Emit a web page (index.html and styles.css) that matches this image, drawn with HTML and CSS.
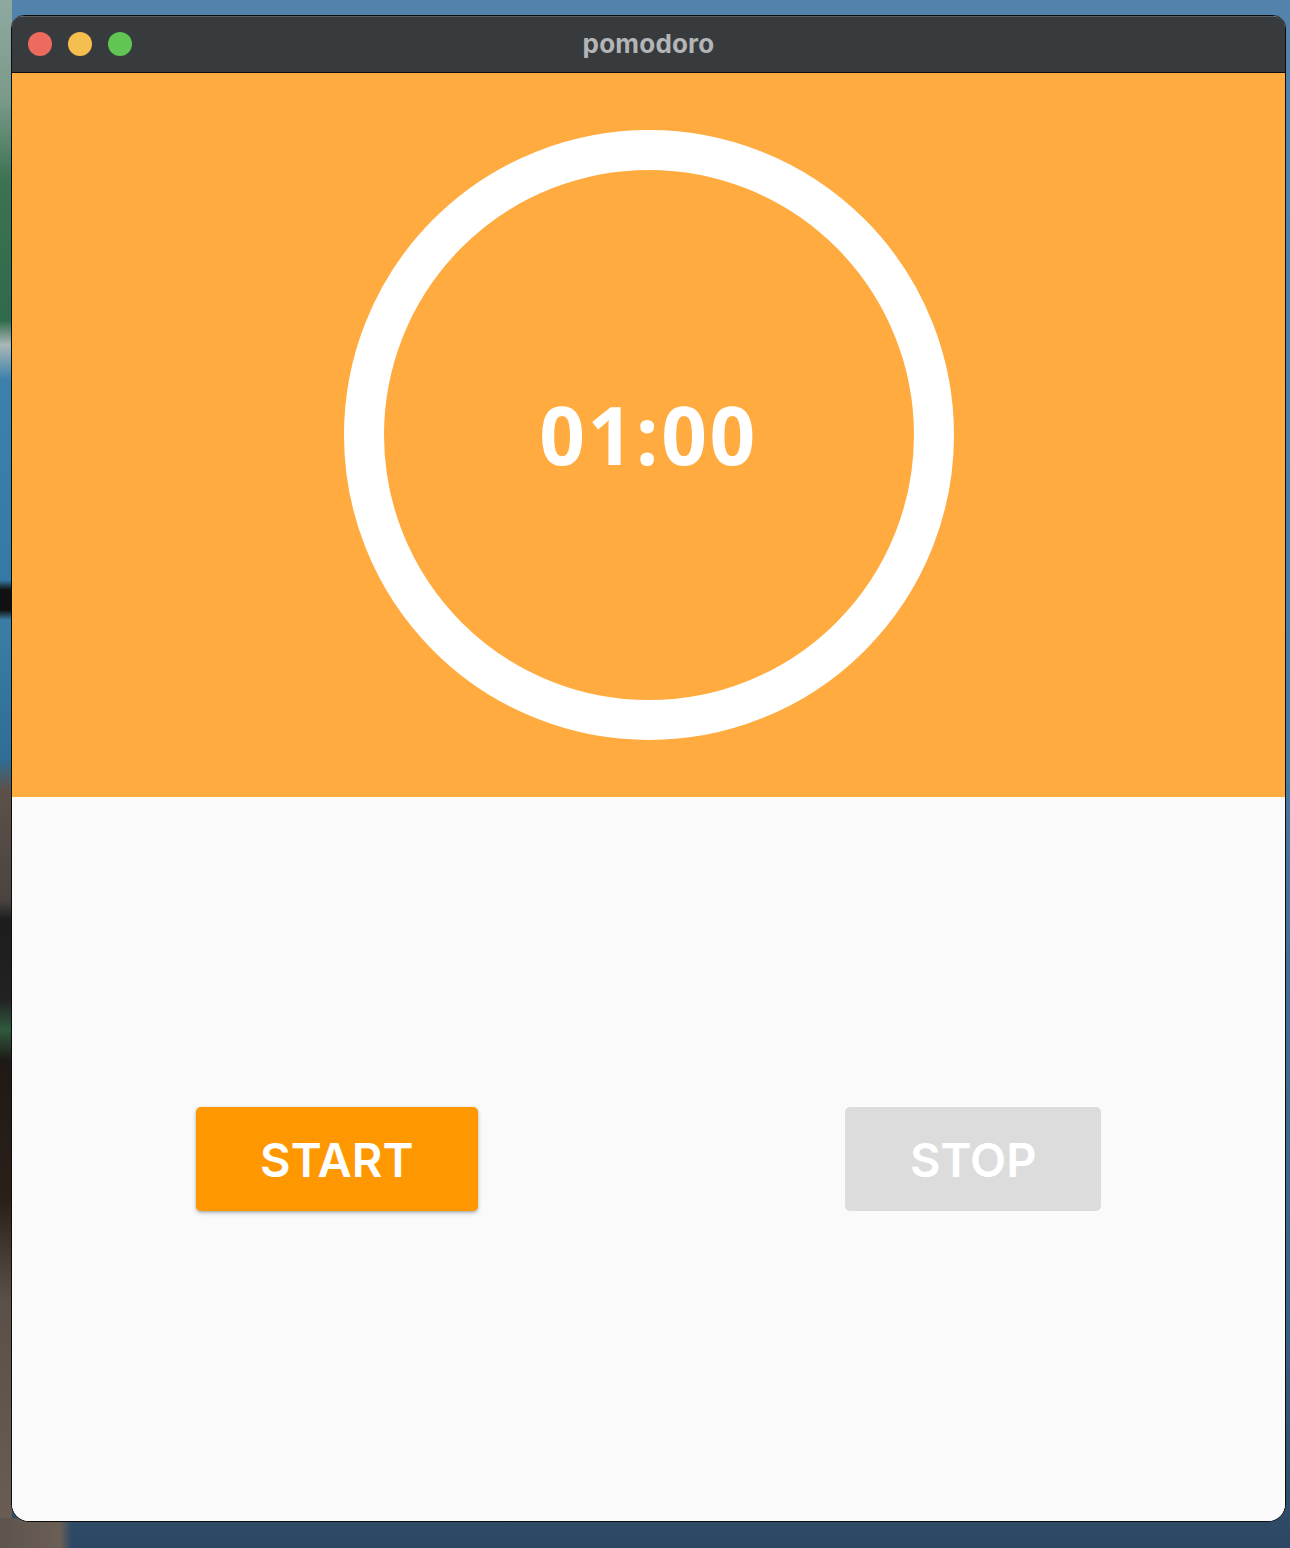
FILE: index.html
```html
<!DOCTYPE html>
<html lang="en">
<head>
<meta charset="utf-8">
<title>pomodoro</title>
<link rel="stylesheet" href="styles.css">
</head>
<body>
<div class="window">
  <header class="titlebar">
    <div class="lights">
      <span class="light red"></span>
      <span class="light yellow"></span>
      <span class="light green"></span>
    </div>
    <div class="title">pomodoro</div>
    <div class="spacer"></div>
  </header>
  <main class="app">
    <section class="timer-pane">
      <div class="ring">
        <span class="time">01:00</span>
      </div>
    </section>
    <section class="controls">
      <button class="btn btn-start" type="button">START</button>
      <button class="btn btn-stop" type="button" disabled>STOP</button>
    </section>
  </main>
</div>
</body>
</html>
```
FILE: styles.css
```css
html, body {
  margin: 0;
  padding: 0;
}

body {
  width: 1290px;
  height: 1548px;
  overflow: hidden;
  background:
    linear-gradient(to right, #5e544c 0px, #6a5e55 60px, rgba(106, 94, 85, 0) 72px)
      left bottom / 80px 30px no-repeat,
    linear-gradient(to bottom,
      #8fa9a0 0px, #7a9a8a 100px, #3c7352 180px, #2f6a4a 320px,
      #a9b7b8 345px, #3b81ab 380px, #347aa4 580px, #111 590px,
      #111 610px, #3a7ea6 620px, #2f6d94 760px, #5c5148 790px,
      #4a4440 900px, #1d1d1d 920px, #222 1000px, #2f5a3e 1030px,
      #1f1a16 1060px, #2a2018 1200px, #5b5047 1300px, #6a5e55 1548px)
      left top / 12px 100% no-repeat,
    linear-gradient(to bottom, #5283ad 0px, #4a7aa3 700px, #3a6287 1300px, #2c4763 1548px);
  font-family: "Inter", "Liberation Sans", sans-serif;
}

.window {
  margin: 15px 0 0 11px;
  width: 1273px;
  border: 1px solid #0d0d0d;
  border-radius: 13px 13px 18px 18px;
  overflow: hidden;
  display: flex;
  flex-direction: column;
  background: #fafafa;
}

.titlebar {
  height: 56px;
  background: #373b3d;
  border-bottom: 1px solid #0c0c0c;
  box-shadow: inset 0 1px 0 rgba(255, 255, 255, 0.18);
  display: grid;
  grid-template-columns: 1fr auto 1fr;
  align-items: center;
}

.lights {
  display: flex;
  gap: 16px;
  padding-left: 16px;
}

.light {
  width: 24px;
  height: 24px;
  border-radius: 50%;
  display: block;
}

.red { background: #ed6a5e; }
.yellow { background: #f5bf4f; }
.green { background: #61c554; }

.title {
  color: #b3b5b7;
  font-family: "Inter", "Liberation Sans", sans-serif;
  font-weight: 700;
  font-size: 26px;
  letter-spacing: 0.2px;
  margin-top: -2px;
}

.app {
  display: flex;
  flex-direction: column;
}

.timer-pane {
  height: 724px;
  background: #ffab40;
  display: flex;
  align-items: center;
  justify-content: center;
}

.ring {
  width: 610px;
  height: 610px;
  box-sizing: border-box;
  border: 40px solid #ffffff;
  border-radius: 50%;
  display: flex;
  align-items: center;
  justify-content: center;
}

.time {
  color: #ffffff;
  font-family: "Open Sans", "Liberation Sans", sans-serif;
  font-weight: 700;
  font-size: 80px;
  letter-spacing: 2.5px;
  line-height: 1;
  margin-top: -3px;
}

.controls {
  height: 724px;
  background: #fafafa;
  display: flex;
  align-items: center;
  justify-content: space-around;
}

.btn {
  height: 104px;
  border: none;
  border-radius: 5px;
  color: #ffffff;
  font-family: "Inter", "Liberation Sans", sans-serif;
  font-weight: 600;
  font-size: 47px;
  letter-spacing: 0px;
  padding: 0;
  display: flex;
  align-items: center;
  justify-content: center;
}

.btn-start {
  width: 282px;
  background: #ff9800;
  box-shadow: 0 2px 4px rgba(0, 0, 0, 0.25), 0 1px 2px rgba(0, 0, 0, 0.12);
}

.btn-stop {
  width: 256px;
  background: #dcdcdc;
}
```
